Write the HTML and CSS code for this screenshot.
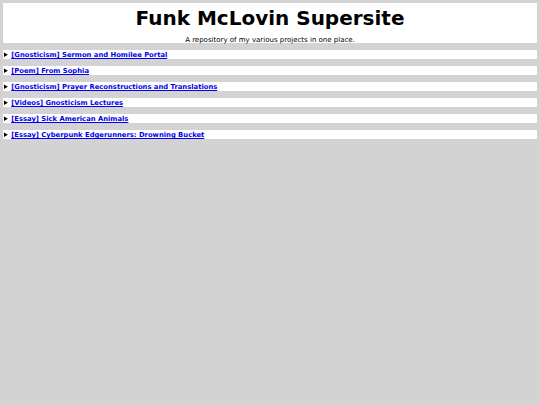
FILE: index.html
```html
<!DOCTYPE html>
<html>
<head>
<meta charset="utf-8">
<link rel="stylesheet" href="styles.css">
</head>
<body>
<header class="site-header">
  <h1 class="title">Funk McLovin Supersite</h1>
  <p class="tagline">A repository of my various projects in one place.</p>
</header>
<main class="list">
  <details class="entry"><summary class="entry-summary"><a href="#">[Gnosticism] Sermon and Homilee Portal</a></summary></details>
  <details class="entry"><summary class="entry-summary"><a href="#">[Poem] From Sophia</a></summary></details>
  <details class="entry"><summary class="entry-summary"><a href="#">[Gnosticism] Prayer Reconstructions and Translations</a></summary></details>
  <details class="entry"><summary class="entry-summary"><a href="#">[Videos] Gnosticism Lectures</a></summary></details>
  <details class="entry"><summary class="entry-summary"><a href="#">[Essay] Sick American Animals</a></summary></details>
  <details class="entry"><summary class="entry-summary"><a href="#">[Essay] Cyberpunk Edgerunners: Drowning Bucket</a></summary></details>
</main>
</body>
</html>
```
FILE: styles.css
```css
html, body {
  background: #d3d3d3;
}
body {
  margin: 3px;
  font-family: "DejaVu Sans", Verdana, sans-serif;
  color: #000;
}
.site-header {
  background: #fff;
  text-align: center;
  height: 40px;
  display: flex;
  flex-direction: column;
  align-items: center;
}
.title {
  margin: 0;
  padding-top: 2px;
  font-size: 20px;
  line-height: 26px;
  font-weight: bold;
}
.tagline {
  margin: 5px 0 0;
  font-size: 7px;
  line-height: 8px;
}
.list {
  display: flex;
  flex-direction: column;
  gap: 7px;
  margin-top: 7px;
}
.entry-summary {
  background: #fff;
  font-size: 6.8px;
  height: 8px;
  padding-top: 1px;
  line-height: 8px;
  font-weight: bold;
  cursor: pointer;
  padding-left: 1px;
}
.entry-summary a {
  color: #0000ee;
}
```
